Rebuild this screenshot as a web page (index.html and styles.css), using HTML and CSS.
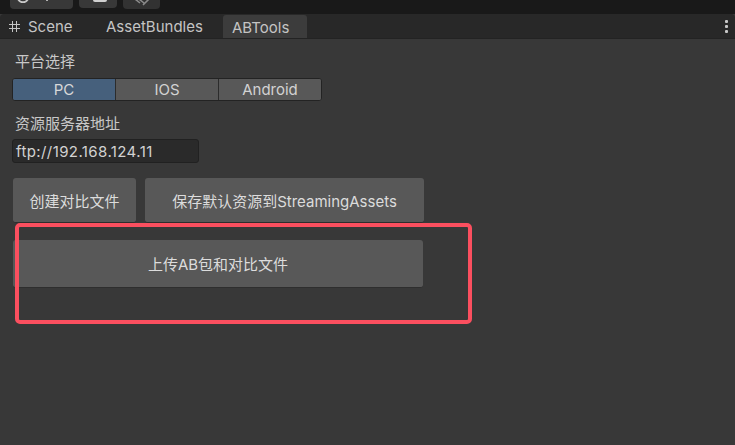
FILE: index.html
```html
<!DOCTYPE html>
<html lang="zh">
<head>
<meta charset="utf-8">
<link rel="stylesheet" href="styles.css">
</head>
<body>
<div class="toolbar">
  <div class="tb-btn tb-a">
    <svg class="tb-icon" width="63" height="9" viewBox="0 0 63 9"><path d="M8 -1 A5.5 5.5 0 0 0 18 -1" fill="none" stroke="#c8c8c8" stroke-width="1.8"/><rect x="36" y="-2" width="2" height="3" fill="#b0b0b0"/></svg>
  </div>
  <div class="tb-btn tb-b">
    <svg class="tb-icon" width="38" height="8" viewBox="0 0 38 8"><rect x="14" y="-4" width="14" height="6" rx="2" fill="#d0d0d0"/></svg>
  </div>
  <div class="tb-btn tb-c">
    <svg class="tb-icon" width="37" height="9" viewBox="0 0 37 9"><path d="M12 -1 L17 3 M16 -1 L21 3 M26 -1 L20 5" fill="none" stroke="#8a8a8a" stroke-width="1.6"/></svg>
  </div>
</div>
<div class="tabbar">
  <div class="tab tab-scene"><svg class="hash" width="11" height="11" viewBox="0 0 11 11"><path d="M3.5 0 V11 M7.5 0 V11 M0 3.5 H11 M0 7.5 H11" stroke="#c4c4c4" stroke-width="1" fill="none"/></svg>Scene</div>
  <div class="tab tab-ab">AssetBundles</div>
  <div class="tab tab-active">ABTools</div>
  <div class="tab-spacer"></div>
  <div class="kebab"><i></i><i></i><i></i></div>
</div>
<main class="content">
  <div class="label first">平台选择</div>
  <div class="segmented">
    <div class="seg active">PC</div>
    <div class="seg">IOS</div>
    <div class="seg">Android</div>
  </div>
  <div class="label second">资源服务器地址</div>
  <div class="field">ftp://192.168.124.11</div>
  <div class="btn-row">
    <div class="btn btn-create">创建对比文件</div>
    <div class="btn btn-save">保存默认资源到StreamingAssets</div>
  </div>
  <div class="btn btn-upload">上传AB包和对比文件</div>
  <div class="highlight"></div>
</main>
</body>
</html>
```
FILE: styles.css
```css
html, body {
  margin: 0;
  padding: 0;
}
body {
  width: 735px;
  height: 445px;
  overflow: hidden;
  background: #383838;
  font-family: Inter, "Noto Sans CJK SC", sans-serif;
  font-size: 15px;
  color: #c8c8c8;
}
.toolbar {
  height: 14px;
  background: #191919;
  display: flex;
  align-items: flex-start;
  padding-left: 10px;
  gap: 6px;
}
.tb-btn {
  background: #383838;
  border-radius: 0 0 4px 4px;
  height: 9px;
  overflow: hidden;
}
.tb-a { width: 63px; }
.tb-b { width: 38px; height: 8px; }
.tb-c { width: 37px; background: #323232; }
.tb-icon { display: block; }
.tabbar {
  height: 24px;
  background: #282828;
  display: flex;
  align-items: stretch;
  border-bottom: 1px solid #232323;
  border-radius: 4px 4px 0 0;
}
.tab {
  display: flex;
  align-items: center;
  color: #c4c4c4;
  font-size: 15px;
  line-height: 1;
  padding-top: 1px;
}
.tab-scene {
  width: 96px;
  padding-left: 9px;
  box-sizing: border-box;
}
.hash {
  margin-right: 8px;
  flex: none;
}
.tab-ab {
  width: 117px;
  padding-left: 10px;
  box-sizing: border-box;
}
.tab-active {
  margin-left: 10px;
  width: 84px;
  box-sizing: border-box;
  padding-left: 9px;
  background: #3c3c3c;
  border-radius: 3px 3px 0 0;
  margin-top: 1px;
}
.tab-spacer { flex: 1; }
.kebab {
  width: 16px;
  display: flex;
  flex-direction: column;
  justify-content: center;
  align-items: center;
  gap: 2px;
  margin-right: 1px;
}
.kebab i {
  width: 3px;
  height: 3px;
  background: #c8c8c8;
  border-radius: 1px;
}
.content {
  position: relative;
  padding: 0 12px;
}
.label {
  line-height: 20px;
  height: 20px;
  color: #c8c8c8;
  padding-left: 3px;
}
.label.first { padding-top: 13px; }
.label.second { margin-top: 13px; }
.segmented {
  margin-top: 6px;
  width: 310px;
  height: 23px;
  box-sizing: border-box;
  display: flex;
  border: 1px solid #232323;
  border-radius: 3px;
  overflow: hidden;
  background: #585858;
}
.seg {
  flex: 1;
  display: flex;
  align-items: center;
  justify-content: center;
  color: #d2d2d2;
  background: #585858;
  border-left: 1px solid #2c2c2c;
}
.seg:first-child { border-left: none; }
.seg.active {
  background: #46607c;
  color: #d8d8d8;
}
.field {
  margin-top: 5px;
  width: 187px;
  height: 24px;
  box-sizing: border-box;
  background: #2a2a2a;
  border: 1px solid #212121;
  border-radius: 3px;
  padding-left: 3px;
  display: flex;
  align-items: center;
  color: #d2d2d2;
  letter-spacing: 0.4px;
}
.btn-row {
  margin-top: 15px;
  display: flex;
  gap: 9px;
  margin-left: 1px;
}
.btn {
  height: 45px;
  box-sizing: border-box;
  background: #585858;
  border-radius: 3px;
  border-bottom: 1px solid #2e2e2e;
  display: flex;
  align-items: center;
  justify-content: center;
  color: #dcdcdc;
}
.btn-create { width: 123px; }
.btn-save { width: 279px; }
.btn-upload {
  margin-top: 17px;
  margin-left: 1px;
  width: 410px;
  height: 48px;
}
.highlight {
  position: absolute;
  left: 15px;
  top: 184px;
  width: 457px;
  height: 101px;
  box-sizing: border-box;
  border: 4px solid #fb4f5f;
  border-radius: 5px;
}
```
